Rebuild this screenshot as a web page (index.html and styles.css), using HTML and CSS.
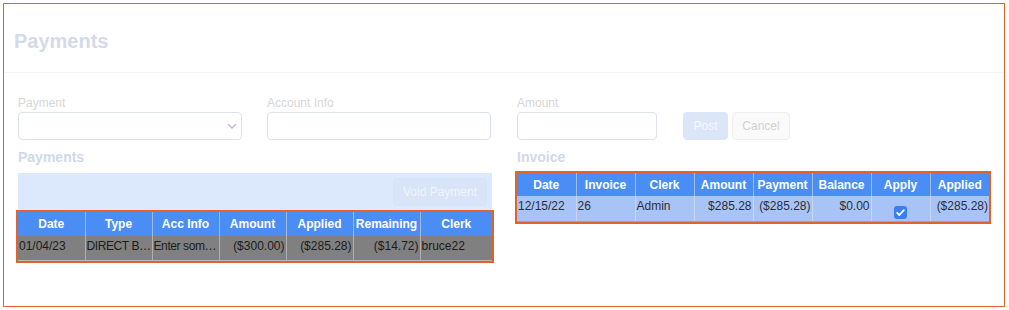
FILE: index.html
```html
<!DOCTYPE html>
<html lang="en">
  <head>
    <meta charset="UTF-8" />
    <title>Payments</title>
    <link rel="stylesheet" href="styles.css">
  </head>
  <body>
    <div class="frame">
      <div class="page-head">
        <h1>Payments</h1>
      </div>

      <div class="content">
        <div class="fields">
          <div class="field wide">
            <label>Payment</label>
            <div class="input select">
              <svg width="10" height="6" viewBox="0 0 10 6"><path d="M1 1l4 4 4-4" fill="none" stroke="#b9bcc4" stroke-width="1.3"/></svg>
            </div>
          </div>
          <div class="field wide">
            <label>Account Info</label>
            <div class="input"></div>
          </div>
        </div>

        <div class="fields">
          <div class="field amount">
            <label>Amount</label>
            <div class="input"></div>
          </div>
          <div class="actions">
            <button class="btn post">Post</button>
            <button class="btn cancel">Cancel</button>
          </div>
        </div>

        <div class="section">
          <h2>Payments</h2>
          <div class="toolbar">
            <button class="btn void">Void Payment</button>
          </div>
          <table class="grid payments">
            <colgroup>
              <col style="width:67px"><col style="width:67px"><col style="width:67px"><col style="width:67px">
              <col style="width:67px"><col style="width:67px"><col>
            </colgroup>
            <thead>
              <tr><th>Date</th><th>Type</th><th>Acc Info</th><th>Amount</th><th>Applied</th><th>Remaining</th><th>Clerk</th></tr>
            </thead>
            <tbody>
              <tr>
                <td>01/04/23</td>
                <td class="tight">DIRECT B…</td>
                <td class="tight">Enter som…</td>
                <td class="num">($300.00)</td>
                <td class="num">($285.28)</td>
                <td class="num">($14.72)</td>
                <td>bruce22</td>
              </tr>
            </tbody>
          </table>
        </div>

        <div class="section">
          <h2>Invoice</h2>
          <table class="grid invoice">
            <thead>
              <tr><th>Date</th><th>Invoice</th><th>Clerk</th><th>Amount</th><th>Payment</th><th>Balance</th><th>Apply</th><th>Applied</th></tr>
            </thead>
            <tbody>
              <tr>
                <td>12/15/22</td>
                <td>26</td>
                <td>Admin</td>
                <td class="num">$285.28</td>
                <td class="num">($285.28)</td>
                <td class="num">$0.00</td>
                <td class="apply">
                  <span class="check">
                    <svg width="13" height="13" viewBox="0 0 13 13"><path d="M3.2 6.8l2.2 2.2 4.4-4.8" fill="none" stroke="#fff" stroke-width="1.8" stroke-linecap="round" stroke-linejoin="round"/></svg>
                  </span>
                </td>
                <td class="num">($285.28)</td>
              </tr>
            </tbody>
          </table>
        </div>
      </div>
    </div>
  </body>
</html>
```

FILE: styles.css
```css
body {
  margin: 0;
  font-family: "Liberation Sans", Arial, sans-serif;
  background: #fff;
}
.frame {
  margin: 3px;
  width: 1002px;
  height: 304px;
  box-sizing: border-box;
  border: 1px solid #e2622c;
}
.page-head {
  padding: 25px 10px 0;
  border-bottom: 1px solid #f3f4f6;
}
h1 {
  margin: 0 0 19px;
  font-size: 20px;
  line-height: 24px;
  font-weight: bold;
  color: #d3dbe8;
}
.content {
  display: grid;
  grid-template-columns: 474px 1fr;
  column-gap: 25px;
  padding: 23px 14px 0 14px;
}
.fields {
  display: flex;
  align-items: flex-end;
  gap: 25px;
}
.field label {
  display: block;
  font-size: 12px;
  line-height: 14px;
  color: #d6d6d6;
  margin-bottom: 2px;
}
.input {
  height: 28px;
  box-sizing: border-box;
  border: 1px solid #dde1ee;
  border-radius: 4px;
  background: #fff;
}
.field.wide {
  width: 224px;
}
.field.amount {
  width: 140px;
}
.select {
  display: flex;
  align-items: center;
  justify-content: flex-end;
  padding-right: 4px;
}
.actions {
  display: flex;
  gap: 4px;
  margin-left: 1px;
}
.btn {
  height: 28px;
  box-sizing: border-box;
  border-radius: 4px;
  font-family: "Liberation Sans", Arial, sans-serif;
  font-size: 12px;
  padding: 0;
}
.post {
  width: 45px;
  background: #dbe6f8;
  border: 1px solid #dbe6f8;
  color: #f5f8fd;
}
.cancel {
  width: 58px;
  background: #fafafa;
  border: 1px solid #f0f0f0;
  color: #d2d2d2;
}
.section h2 {
  margin: 9px 0 7px;
  font-size: 14px;
  line-height: 17px;
  font-weight: bold;
  color: #d0d9e8;
}
.toolbar {
  display: flex;
  justify-content: flex-end;
  height: 39px;
  box-sizing: border-box;
  padding: 5px 5px 0;
  background: #dce8fb;
}
.void {
  width: 94px;
  background: #d8e4f7;
  border: 1px solid #d6e2f5;
  color: #f1f5fc;
}
.grid {
  border-collapse: collapse;
  table-layout: fixed;
  outline: 2px solid #e2622c;
  font-size: 12px;
}
.grid th {
  background: #4a8ef5;
  color: #fff;
  font-weight: bold;
  text-align: center;
  height: 24px;
  padding: 0 1px;
  border-left: 1px solid #9dbde9;
}
.grid td {
  vertical-align: top;
  padding: 3px 1px 0;
  white-space: nowrap;
  overflow: hidden;
  color: #1c1c1c;
}
.grid td.tight {
  letter-spacing: -0.4px;
}
.grid th:first-child,
.grid td:first-child {
  border-left: none;
}
.grid .num {
  text-align: right;
}
.payments {
  width: 474px;
}
.payments td {
  background: #808080;
  height: 21px;
  border-left: 1px solid #b0b0b0;
  border-bottom: 1px solid #b8b8b8;
}
.invoice {
  width: 472px;
  margin-top: 2px;
}
.invoice th {
  height: 23px;
}
.invoice td {
  background: #a8c4f6;
  height: 22px;
  color: #2b2f3a;
  border-left: 1px solid #c7d6f2;
  border-bottom: 1px solid #9aa6b8;
}
.invoice td.apply {
  text-align: center;
  padding-top: 10px;
  height: 15px;
}
.check {
  display: inline-block;
  width: 13px;
  height: 13px;
  border-radius: 3px;
  background: #3a7ef2;
  vertical-align: top;
}
.check svg {
  display: block;
}
```
